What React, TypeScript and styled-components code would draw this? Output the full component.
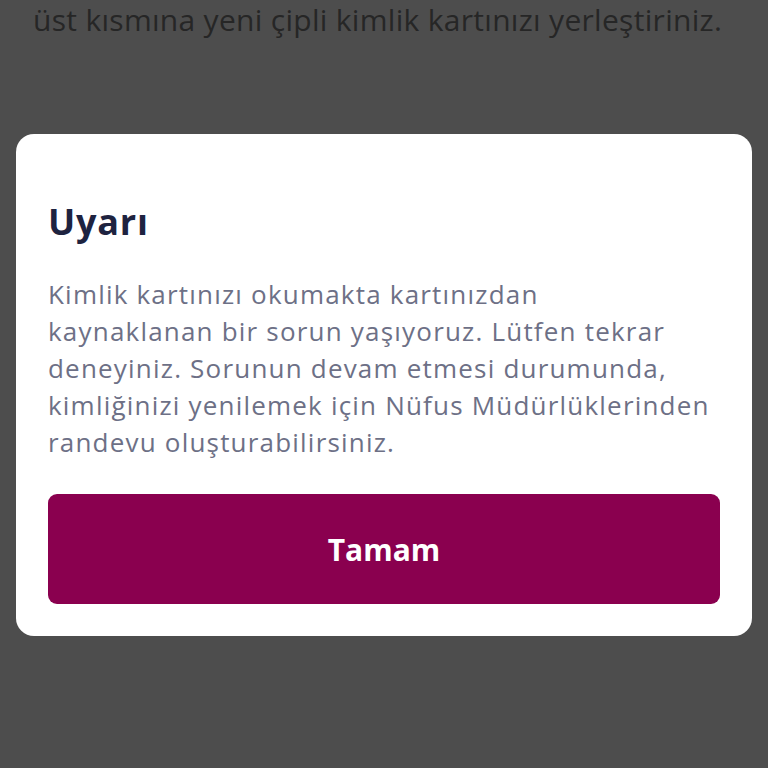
import styled, { createGlobalStyle } from "styled-components";
import { FC } from "react";

const GlobalStyle = createGlobalStyle`
    html, body {
        margin: 0;
        padding: 0;
        background: #4d4d4d;
    }
    * {
        box-sizing: border-box;
    }
`;

const App: FC = () => {
    return (
        <Page>
            <GlobalStyle />
            <BackText>üst kısmına yeni çipli kimlik kartınızı yerleştiriniz.</BackText>
            <Dialog>
                <Title>Uyarı</Title>
                <Message>
                    Kimlik kartınızı okumakta kartınızdan
                    <br />
                    kaynaklanan bir sorun yaşıyoruz. Lütfen tekrar
                    <br />
                    deneyiniz. Sorunun devam etmesi durumunda,
                    <br />
                    kimliğinizi yenilemek için Nüfus Müdürlüklerinden
                    <br />
                    randevu oluşturabilirsiniz.
                </Message>
                <ConfirmButton>Tamam</ConfirmButton>
            </Dialog>
        </Page>
    );
};

const Page = styled.div`
    width: 768px;
    height: 768px;
    overflow: hidden;
    background: #4d4d4d;
    display: flex;
    flex-direction: column;
    font-family: "Open Sans", Lato, sans-serif;
`;

const BackText = styled.p`
    margin: 0;
    padding: 0 0 0 33px;
    font-size: 30px;
    line-height: 40px;
    letter-spacing: 0.3px;
    color: #262626;
    white-space: nowrap;
`;

const Dialog = styled.div`
    margin: 94px 16px 0;
    background: #ffffff;
    border-radius: 18px;
    padding: 68px 32px 32px;
    display: flex;
    flex-direction: column;
`;

const Title = styled.h2`
    margin: 0;
    font-size: 36px;
    line-height: 40px;
    font-weight: 700;
    letter-spacing: 0.8px;
    color: #1e2340;
`;

const Message = styled.p`
    margin: 34px 0 0;
    font-size: 26px;
    line-height: 37px;
    letter-spacing: 1.2px;
    color: #6d7086;
`;

const ConfirmButton = styled.button`
    margin-top: 33px;
    height: 110px;
    width: 100%;
    border: none;
    border-radius: 9px;
    background: #8a004f;
    color: #ffffff;
    font-family: inherit;
    font-size: 30px;
    font-weight: 700;
    cursor: pointer;
`;

export default App;
